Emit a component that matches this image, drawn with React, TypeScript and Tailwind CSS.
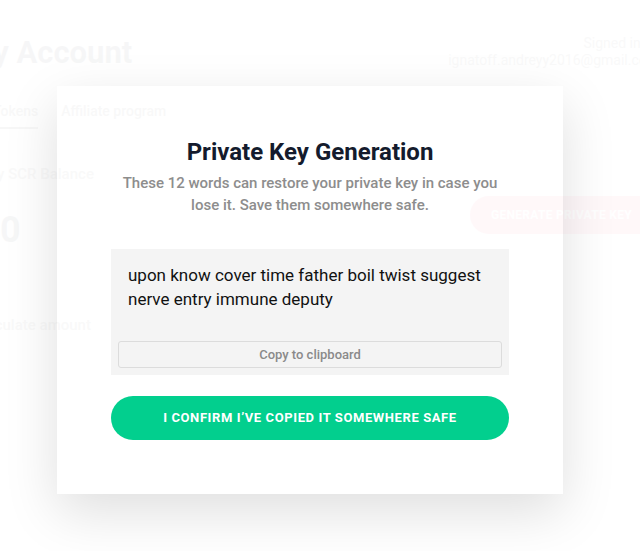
import React from "react";

export default function App() {
  return (
    <div className="relative w-[640px] h-[551px] overflow-hidden bg-white font-['Roboto',sans-serif]">
      {/* Modal */}
      <div className="absolute left-[57px] top-[86px] w-[506px] h-[408px] bg-white shadow-[0_18px_50px_rgba(0,0,0,0.13)] px-[54px] flex flex-col items-center">
        <h2 className="mt-[50px] text-[24px] leading-[32px] font-bold text-[#141b2d]">Private Key Generation</h2>
        <p className="mt-[4px] text-[15px] leading-[22px] font-medium text-[#8d8d8d] text-center">
          These 12 words can restore your private key in case you
          <br />
          lose it. Save them somewhere safe.
        </p>
        <div className="mt-[33px] w-full bg-[#f4f4f4] px-[7px] pt-[14px] pb-[7px] flex flex-col">
          <p className="px-[10px] text-[17px] leading-[24px] text-[#111]">
            upon know cover time father boil twist suggest nerve entry immune deputy
          </p>
          <button className="mt-[30px] h-[27px] w-full rounded-[3px] border border-[#dcdcdc] text-[13px] font-medium text-[#8a8a8a] flex items-center justify-center">
            Copy to clipboard
          </button>
        </div>
        <button className="mt-[21px] w-full h-[44px] rounded-full bg-[#02cf8e] text-white text-[13px] font-bold tracking-[0.6px] flex items-center justify-center">
          I CONFIRM I’VE COPIED IT SOMEWHERE SAFE
        </button>
      </div>

      {/* Fading background page, drawn faintly over everything */}
      <div className="relative z-10 opacity-[0.03] pointer-events-none flex flex-col">
        <div className="flex justify-between items-start pt-[31px]">
          <h1 className="ml-[-34px] text-[31px] leading-[44px] font-bold text-[#141b2d]">My Account</h1>
          <div className="flex flex-col items-end pt-[4px] mr-[-19px] text-[14px] leading-[17px] text-[#555]">
            <span>Signed in as</span>
            <span>ignatoff.andreyy2016@gmail.com</span>
          </div>
        </div>
        <div className="flex gap-[23px] mt-[26px] ml-[-7px] text-[14px] font-medium text-[#444]">
          <span className="border-b-2 border-[#333] pb-[5px]">Tokens</span>
          <span>Affiliate program</span>
        </div>
        <div className="flex justify-between">
          <div className="flex flex-col ml-[-16px]">
            <span className="mt-[34px] text-[15px] font-medium text-[#555]">My SCR Balance</span>
            <span className="mt-[22px] text-[36px] leading-[44px] font-bold text-[#141b2d] ml-[16px]">0</span>
          </div>
          <div className="shrink-0 mt-[67px] h-[38px] w-[200px] mr-[-30px] rounded-full bg-[#ff3f6c] flex items-center pl-[21px] text-[12px] font-bold text-white tracking-[0.3px]">
            GENERATE PRIVATE KEY
          </div>
        </div>
        <span className="mt-[62px] ml-[-27px] text-[15px] font-medium text-[#555]">Calculate amount</span>
      </div>
    </div>
  );
}
